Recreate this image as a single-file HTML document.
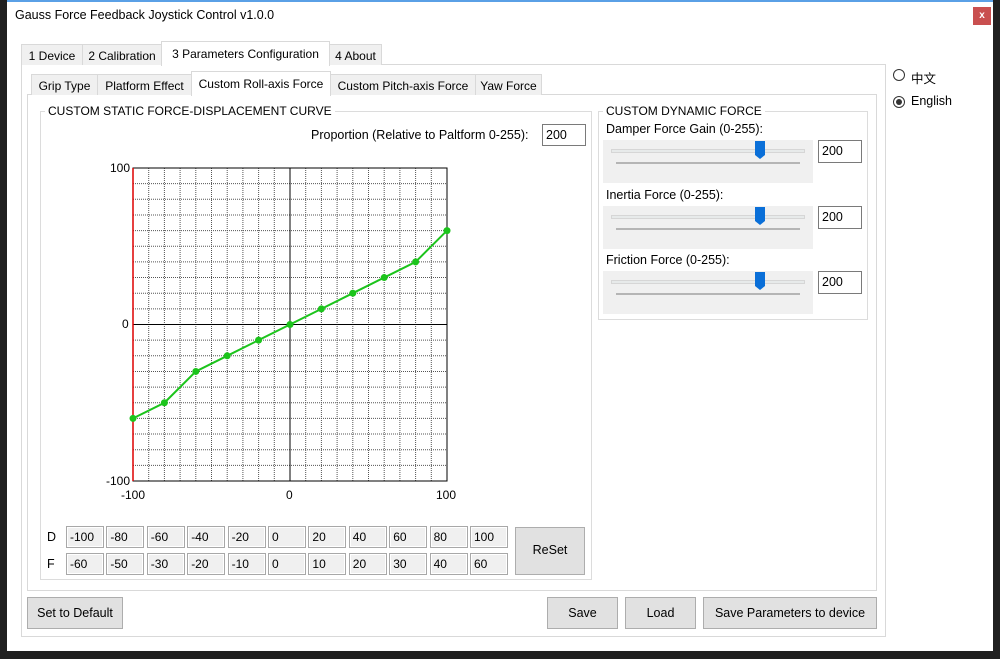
<!DOCTYPE html>
<html><head><meta charset="utf-8"><style>
*{box-sizing:border-box;margin:0;padding:0}
body{width:1000px;height:659px;background:#202020;position:relative;overflow:hidden;font-family:"Liberation Sans","Noto Sans CJK SC",sans-serif;font-size:12.5px;color:#000}
.a{position:absolute}
.win{left:7px;top:0;width:986px;height:651px;background:#fff;border-top:2px solid #5aa0e6}
.tab{position:absolute;background:#f0f0f0;border:1px solid #d9d9d9;border-bottom:none;text-align:center;white-space:nowrap;font-size:12px}
.tab.sel{background:#fff;z-index:2}
.panel{position:absolute;background:#fff;border:1px solid #d9d9d9}
.grp{position:absolute;border:1px solid #dcdcdc}
.grp .t{position:absolute;left:4px;top:-8px;background:#fff;padding:0 3px;font-size:12px}
.cell{position:absolute;width:38px;height:22px;background:#f0f0f0;border:1px solid #a8a8a8;box-shadow:inset 0 0 0 1px #fff;padding:3px 3px;font-size:12px}
.btn{position:absolute;background:#e1e1e1;border:1px solid #adadad;text-align:center;font-size:12.5px}
.inp{position:absolute;background:#fff;border:1px solid #7a7a7a;padding:3px 3px;font-size:12.5px}
.sl{position:absolute;left:603px;width:210px;height:43px;background:#f0f0f0}
.sl .tr{position:absolute;left:8px;top:9px;width:194px;height:4px;background:#e7eaea;border:1px solid #d6d6d6}
.sl .tk{position:absolute;left:13px;top:22px;width:184px;height:2px;background:#b5b5b5}
</style></head><body>
<div class="a win"></div>
<div class="a" style="left:15px;top:8px;font-size:12.5px">Gauss Force Feedback Joystick Control v1.0.0</div>
<div class="a" style="left:973px;top:7px;width:18px;height:18px;background:#c94f4f;color:#fff;font-size:10px;text-align:center;line-height:17px;font-weight:bold">x</div>

<div class="panel" style="left:21px;top:64px;width:865px;height:573px"></div>
<div class="tab" style="left:21px;top:44px;width:62px;height:21px;padding-top:4px">1 Device</div>
<div class="tab" style="left:82px;top:44px;width:80px;height:21px;padding-top:4px">2 Calibration</div>
<div class="tab sel" style="left:161px;top:41px;width:169px;height:25px;padding-top:5px">3 Parameters Configuration</div>
<div class="tab" style="left:329px;top:44px;width:53px;height:21px;padding-top:4px">4 About</div>

<div class="panel" style="left:27px;top:94px;width:850px;height:497px"></div>
<div class="tab" style="left:31px;top:74px;width:67px;height:21px;padding-top:4px">Grip Type</div>
<div class="tab" style="left:97px;top:74px;width:95px;height:21px;padding-top:4px">Platform Effect</div>
<div class="tab sel" style="left:191px;top:71px;width:140px;height:25px;padding-top:5px">Custom Roll-axis Force</div>
<div class="tab" style="left:330px;top:74px;width:146px;height:21px;padding-top:4px">Custom Pitch-axis Force</div>
<div class="tab" style="left:475px;top:74px;width:67px;height:21px;padding-top:4px">Yaw Force</div>

<div class="grp" style="left:40px;top:111px;width:552px;height:469px"><div class="t">CUSTOM STATIC FORCE-DISPLACEMENT CURVE</div></div>
<div class="a" style="left:311px;top:128px">Proportion (Relative to Paltform 0-255):</div>
<div class="inp" style="left:542px;top:124px;width:44px;height:22px">200</div>

<svg class="a" style="left:100px;top:155px" width="360" height="350" id="ch">
</svg>
<div class="a" style="left:110px;top:161px;font-size:12px">100</div>
<div class="a" style="left:122px;top:317px;font-size:12px">0</div>
<div class="a" style="left:106px;top:474px;font-size:12px">-100</div>
<div class="a" style="left:121px;top:488px;font-size:12px">-100</div>
<div class="a" style="left:286px;top:488px;font-size:12px">0</div>
<div class="a" style="left:436px;top:488px;font-size:12px">100</div>

<div class="a" style="left:47px;top:530px">D</div>
<div class="a" style="left:47px;top:557px">F</div>
<div id="cells"></div>
<div class="btn" style="left:515px;top:527px;width:70px;height:48px;padding-top:15px">ReSet</div>

<div class="grp" style="left:598px;top:111px;width:270px;height:209px"><div class="t">CUSTOM DYNAMIC FORCE</div></div>
<div class="a" style="left:606px;top:122px">Damper Force Gain (0-255):</div>
<div class="a" style="left:606px;top:188px">Inertia Force (0-255):</div>
<div class="a" style="left:606px;top:253px">Friction Force (0-255):</div>
<div class="sl" style="top:140px"><div class="tr"></div><div class="tk"></div></div>
<div class="sl" style="top:206px"><div class="tr"></div><div class="tk"></div></div>
<div class="sl" style="top:271px"><div class="tr"></div><div class="tk"></div></div>
<svg class="a" style="left:754px;top:140px" width="12" height="20"><path d="M1 1H11V15L6 19L1 15Z" fill="#0a6fd8"/></svg>
<svg class="a" style="left:754px;top:206px" width="12" height="20"><path d="M1 1H11V15L6 19L1 15Z" fill="#0a6fd8"/></svg>
<svg class="a" style="left:754px;top:271px" width="12" height="20"><path d="M1 1H11V15L6 19L1 15Z" fill="#0a6fd8"/></svg>
<div class="inp" style="left:818px;top:140px;width:44px;height:23px">200</div>
<div class="inp" style="left:818px;top:206px;width:44px;height:23px">200</div>
<div class="inp" style="left:818px;top:271px;width:44px;height:23px">200</div>

<svg class="a" style="left:892px;top:68px" width="14" height="14"><circle cx="7" cy="7" r="5.5" fill="#fff" stroke="#333"/></svg>
<div class="a" style="left:911px;top:68px">中文</div>
<svg class="a" style="left:892px;top:95px" width="14" height="14"><circle cx="7" cy="7" r="5.5" fill="#fff" stroke="#333"/><circle cx="7" cy="7" r="3" fill="#333"/></svg>
<div class="a" style="left:911px;top:94px">English</div>

<div class="btn" style="left:27px;top:597px;width:96px;height:32px;padding-top:8px">Set to Default</div>
<div class="btn" style="left:547px;top:597px;width:71px;height:32px;padding-top:8px">Save</div>
<div class="btn" style="left:625px;top:597px;width:71px;height:32px;padding-top:8px">Load</div>
<div class="btn" style="left:703px;top:597px;width:174px;height:32px;padding-top:8px">Save Parameters to device</div>

<script>
var s='',L=33,T=13,W=314,H=313;
for(var i=1;i<20;i++){var x=L+W*i/20,y=T+H*i/20;
if(i!=10){s+='<line x1="'+x+'" y1="'+T+'" x2="'+x+'" y2="'+(T+H)+'" stroke="#555" stroke-dasharray="1,1"/>';
s+='<line x1="'+L+'" y1="'+y+'" x2="'+(L+W)+'" y2="'+y+'" stroke="#555" stroke-dasharray="1,1"/>';}}
s+='<line x1="'+(L+W/2)+'" y1="'+T+'" x2="'+(L+W/2)+'" y2="'+(T+H)+'" stroke="#000"/>';
s+='<line x1="'+L+'" y1="'+(T+H/2)+'" x2="'+(L+W)+'" y2="'+(T+H/2)+'" stroke="#000"/>';
s+='<rect x="'+L+'" y="'+T+'" width="'+W+'" height="'+H+'" fill="none" stroke="#000"/>';
s+='<line x1="'+L+'" y1="'+T+'" x2="'+L+'" y2="'+(T+H)+'" stroke="#d00" stroke-width="1.5"/>';
var D=[-100,-80,-60,-40,-20,0,20,40,60,80,100],F=[-60,-50,-30,-20,-10,0,10,20,30,40,60],p='',c='';
for(var i=0;i<11;i++){var x=L+W*(D[i]+100)/200,y=T+H*(100-F[i])/200;p+=(i?'L':'M')+x+' '+y;c+='<circle cx="'+x+'" cy="'+y+'" r="3.5" fill="#1cc41c"/>';}
s+='<path d="'+p+'" fill="none" stroke="#1cc41c" stroke-width="2"/>'+c;
document.getElementById('ch').innerHTML=s;
var h='';for(var i=0;i<11;i++){var x=66+i*40.4;
h+='<div class="cell" style="left:'+x+'px;top:526px">'+D[i]+'</div><div class="cell" style="left:'+x+'px;top:553px">'+F[i]+'</div>';}
document.getElementById('cells').innerHTML=h;
</script>
</body></html>
